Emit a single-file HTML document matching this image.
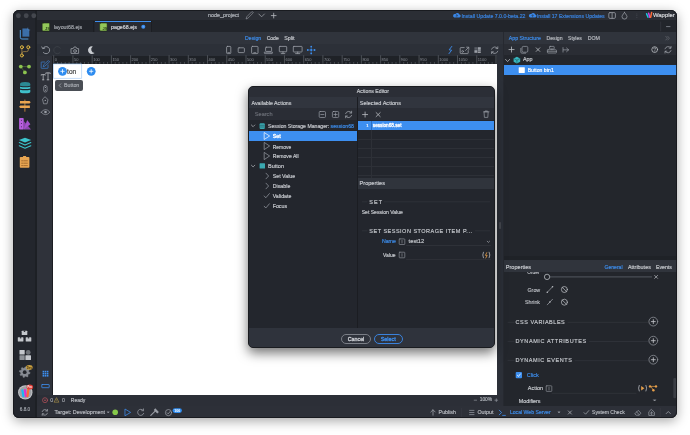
<!DOCTYPE html>
<html><head><meta charset="utf-8">
<style>
*{box-sizing:border-box;margin:0;padding:0}
html,body{width:690px;height:435px;overflow:hidden;background:#fff;font-family:"Liberation Sans",sans-serif;}
#win{position:absolute;left:13px;top:9.5px;width:664px;height:408.5px;border-radius:6px;overflow:hidden;box-shadow:0 3px 12px rgba(0,0,0,.35);background:#22252b}
#in{position:absolute;left:-13px;top:-9.5px;width:690px;height:435px;will-change:transform}
b{position:absolute;display:block}
i{position:absolute;font-style:normal;white-space:nowrap;line-height:1;-webkit-text-stroke:0.16px currentColor}
svg{position:absolute;left:0;top:0;overflow:visible}
</style></head><body>
<div id="win"><div id="in">
<b style="left:36.8px;top:9.5px;width:640.20px;height:11.00px;background:#2b2e35;"></b>
<b style="left:36.8px;top:20.3px;width:640.20px;height:11.90px;background:#22252b;"></b>
<b style="left:95px;top:21px;width:55.50px;height:11.20px;background:#272a31;"></b>
<b style="left:150.5px;top:21px;width:0.70px;height:11.20px;background:#1c1e23;"></b>
<b style="left:93.4px;top:21px;width:0.70px;height:11.20px;background:#1c1e23;"></b>
<b style="left:95px;top:21px;width:55.50px;height:1.10px;background:#3d8ff0;"></b>
<b style="left:36.8px;top:32.2px;width:466.70px;height:11.80px;background:#30343c;"></b>
<b style="left:36.8px;top:44px;width:466.70px;height:12.00px;background:#2c3038;"></b>
<b style="left:36.8px;top:56px;width:15.00px;height:339.00px;background:#2f323a;"></b>
<b style="left:51.8px;top:56px;width:1.20px;height:339.00px;background:#1c1e22;"></b>
<b style="left:53px;top:56px;width:444.00px;height:7.50px;background:#1f2227;"></b>
<b style="left:53px;top:63.5px;width:444.00px;height:331.50px;background:#ffffff;"></b>
<b style="left:497px;top:56px;width:6.50px;height:339.00px;background:#2c3038;"></b>
<b style="left:499.3px;top:222.4px;width:1.40px;height:6.30px;background:#464950;border-radius:0.7px;"></b>
<b style="left:13px;top:9.5px;width:21.50px;height:409.00px;background:#23262d;"></b>
<b style="left:34.5px;top:9.5px;width:2.30px;height:409.00px;background:#1d2025;"></b>
<b style="left:503.5px;top:32px;width:173.50px;height:373.50px;background:#23262c;"></b>
<b style="left:503.5px;top:32px;width:173.50px;height:12.00px;background:#30343c;"></b>
<b style="left:503.5px;top:44px;width:173.50px;height:11.00px;background:#2a2d34;"></b>
<b style="left:503.5px;top:64.8px;width:173.50px;height:10.40px;background:#3d8ff0;"></b>
<i style="left:527.2px;top:271.34px;font-size:4.9px;color:#b9bcc2;">Order</i>
<b style="left:503.5px;top:255.5px;width:173.50px;height:4.70px;background:#1f2227;"></b>
<b style="left:503.5px;top:260.2px;width:173.50px;height:12.20px;background:#30343c;"></b>
<b style="left:503px;top:32px;width:0.70px;height:373.50px;background:#262930;"></b>
<b style="left:36.8px;top:395px;width:466.70px;height:10.50px;background:#2c2f37;"></b>
<b style="left:36.8px;top:405.5px;width:640.20px;height:12.50px;background:#2d3038;"></b>
<i style="left:208.1px;top:13.35px;font-size:5.36px;color:#b4b8bf;">node_project</i>
<i style="left:461.4px;top:13.71px;font-size:5.22px;color:#3a86e6;">Install Update 7.0.0-beta.22</i>
<i style="left:536.9px;top:13.74px;font-size:5.15px;color:#3a86e6;">Install 17 Extensions Updates</i>
<i style="left:653px;top:12.92px;font-size:5.9px;color:#dcdee2;">Wappler</i>
<i style="left:53.9px;top:25.17px;font-size:5.3px;color:#a4a8ae;">layout68.ejs</i>
<i style="left:111px;top:25.17px;font-size:5.3px;color:#d6d9de;">page68.ejs</i>
<i style="left:245px;top:36.00px;font-size:5.23px;color:#3d8ff0;">Design</i>
<i style="left:266.7px;top:36.09px;font-size:5.02px;color:#c8cbd0;">Code</i>
<i style="left:284.2px;top:35.95px;font-size:5.35px;color:#c8cbd0;">Split</i>
<i style="left:508.7px;top:35.99px;font-size:5.27px;color:#3d8ff0;">App Structure</i>
<i style="left:546.4px;top:36.00px;font-size:5.23px;color:#b9bcc2;">Design</i>
<i style="left:568px;top:36.06px;font-size:5.1px;color:#b9bcc2;">Styles</i>
<i style="left:587.7px;top:35.99px;font-size:5.27px;color:#b9bcc2;">DOM</i>
<i style="left:523px;top:57.44px;font-size:5.39px;color:#c8cbd0;">App</i>
<i style="left:527.7px;top:67.86px;font-size:5.1px;color:#ffffff;">Button btn1</i>
<i style="left:505.8px;top:264.96px;font-size:5.57px;color:#c8cbd0;">Properties</i>
<i style="left:604.5px;top:265.46px;font-size:5.09px;color:#3d8ff0;">General</i>
<i style="left:628px;top:265.32px;font-size:5.42px;color:#c8cbd0;">Attributes</i>
<i style="left:656px;top:265.42px;font-size:5.2px;color:#c8cbd0;">Events</i>
<i style="left:525px;top:299.77px;font-size:5.3px;color:#b9bcc2;">Shrink</i>
<i style="left:527.5px;top:287.57px;font-size:5.3px;color:#b9bcc2;">Grow</i>
<i style="left:515.5px;top:320.19px;font-size:5.5px;color:#c4c7cc;letter-spacing:0.52px;">CSS VARIABLES</i>
<i style="left:515.5px;top:339.19px;font-size:5.5px;color:#c4c7cc;letter-spacing:0.6px;">DYNAMIC ATTRIBUTES</i>
<i style="left:515.5px;top:358.49px;font-size:5.5px;color:#c4c7cc;letter-spacing:0.58px;">DYNAMIC EVENTS</i>
<i style="left:526.8px;top:372.77px;font-size:5.54px;color:#3d8ff0;">Click</i>
<i style="left:527.8px;top:386.30px;font-size:5.47px;color:#c8cbd0;">Action</i>
<i style="left:518.8px;top:398.94px;font-size:5.37px;color:#c8cbd0;">Modifiers</i>
<i style="left:50.2px;top:398.17px;font-size:5.3px;color:#a0a4ab;">0</i>
<i style="left:61.9px;top:398.17px;font-size:5.3px;color:#a0a4ab;">0</i>
<i style="left:70.8px;top:398.28px;font-size:5.05px;color:#b9bcc2;">Ready</i>
<i style="left:479.7px;top:398.15px;font-size:4.89px;color:#b0b4ba;">100%</i>
<i style="left:54.6px;top:410.20px;font-size:5.47px;color:#b9bcc2;">Target: Development</i>
<i style="left:438.6px;top:410.27px;font-size:5.3px;color:#b9bcc2;">Publish</i>
<i style="left:477.4px;top:410.26px;font-size:5.33px;color:#b9bcc2;">Output</i>
<i style="left:509.9px;top:410.34px;font-size:5.15px;color:#3d8ff0;">Local Web Server</i>
<i style="left:592px;top:410.36px;font-size:5.09px;color:#b9bcc2;">System Check</i>
<i style="left:19.8px;top:407.53px;font-size:4.7px;color:#a0a4ab;">6.8.0</i>
<i style="left:67.1px;top:68.57px;font-size:6.5px;color:#3a3a3a;">ton</i>
<b style="left:55.2px;top:80.3px;width:27.40px;height:10.30px;background:#4a4e55;border-radius:2px;"></b>
<i style="left:64px;top:83.27px;font-size:5.3px;color:#a9adb3;">Button</i>
<svg width="690" height="435" viewBox="0 0 690 435" fill="none" stroke-linecap="round" stroke-linejoin="round">
<circle cx="18.4" cy="15.7" r="2.45" fill="#44474e"/>
<circle cx="26.2" cy="15.7" r="2.45" fill="#44474e"/>
<circle cx="33.8" cy="15.7" r="2.45" fill="#44474e"/>
<path d="M246.2,18.6 L246.85,16.65 L251.55,11.95 Q252.2,11.3 252.85,11.95 L253.1,12.2 Q253.6,12.8 252.85,13.25 L248.15,17.95 Z" stroke="#9a9ea6" stroke-width="0.6" fill="none" />
<path d="M258.8,14 L261.6,16.8 L264.4,14" stroke="#9a9ea6" stroke-width="0.8" fill="none" />
<path d="M273.7,13.2 V18 M271.3,15.6 H276.1" stroke="#b9bcc2" stroke-width="0.8" fill="none" />
<path d="M454.2,17.4 h5 a1.4,1.4 0 0 0 0.2,-2.8 a2.1,2.1 0 0 0 -3.9,-0.5 a1.7,1.7 0 0 0 -1.3,3.3 Z" stroke="none" stroke-width="0" fill="#3a86e6" />
<path d="M456.8,16.9 v-2 M455.90000000000003,15.7 l0.9,-0.9 l0.9,0.9" stroke="#2b2e35" stroke-width="0.5" fill="none" />
<path d="M530.0,17.4 h5 a1.4,1.4 0 0 0 0.2,-2.8 a2.1,2.1 0 0 0 -3.9,-0.5 a1.7,1.7 0 0 0 -1.3,3.3 Z" stroke="none" stroke-width="0" fill="#3a86e6" />
<path d="M532.6,16.9 v-2 M531.7,15.7 l0.9,-0.9 l0.9,0.9" stroke="#2b2e35" stroke-width="0.5" fill="none" />
<rect x="608.8" y="12.6" width="6.6" height="5.8" rx="1.2" fill="none" stroke="#9a9ea6" stroke-width="0.8"/>
<path d="M612.1,12.8 V18.2" stroke="#9a9ea6" stroke-width="0.8" fill="none" />
<path d="M624.5,12.4 C622.5,15 622,16 622,16.6 A2.5,2.5 0 0 0 627,16.6 C627,16 626.5,15 624.5,12.4 Z" stroke="#9a9ea6" stroke-width="0.75" fill="none" />
<circle cx="636.9" cy="13.9" r="0.45" fill="#5a5e66"/>
<circle cx="636.9" cy="15.6" r="0.45" fill="#5a5e66"/>
<circle cx="636.9" cy="17.3" r="0.45" fill="#5a5e66"/>
<path d="M646.6,13.8 L648,17.3" stroke="#19c8e0" stroke-width="1.5" fill="none" />
<path d="M648.6,13.2 L649.8,17.3" stroke="#d040e0" stroke-width="1.5" fill="none" />
<path d="M651.6,12.6 L650.6,17.3" stroke="#ff6a3a" stroke-width="1.5" fill="none" />
<path d="M660.7,22 V31" stroke="#3a3d44" stroke-width="0.6" fill="none" />
<path d="M666.5,26.6 H670" stroke="#9a9ea6" stroke-width="0.7" fill="none" />
<rect x="42.2" y="23.1" width="7.4" height="7.8" rx="0.8" fill="#93c85a" stroke="#1d2a12" stroke-width="0.5"/>
<text x="45.0" y="30.2" font-size="4.0" font-family="Liberation Sans" font-weight="bold" fill="#2a4018">JS</text>
<rect x="99.7" y="23.1" width="7.4" height="7.8" rx="0.8" fill="#93c85a" stroke="#1d2a12" stroke-width="0.5"/>
<text x="102.5" y="30.2" font-size="4.0" font-family="Liberation Sans" font-weight="bold" fill="#2a4018">JS</text>
<circle cx="143.3" cy="26.8" r="2.0" fill="#3d8ff0"/>
<circle cx="143.3" cy="26.8" r="0.8" fill="#6aaaf5"/>
<path d="M20.3,30.4 V37.4 Q20.3,39 21.9,39 H28" stroke="#52a8f5" stroke-width="0.9" fill="none" />
<path d="M22.2,28 H27.8 L29.8,30 V37.1 H22.2 Z" stroke="#22252b" stroke-width="0.9" fill="#3b6ea8" />
<path d="M27.8,28 V30 H29.8" stroke="#5b8ec8" stroke-width="0.5" fill="none" />
<path d="M21.9,48.8 V53.9 M28.3,48.8 V49.9 Q28.3,51.6 26.6,51.6 H23.6 Q21.9,51.6 21.9,53.3" stroke="#b8944a" stroke-width="0.7" fill="none" />
<circle cx="21.9" cy="47.2" r="1.5" fill="#3a3020" stroke="#e8c14a" stroke-width="0.9"/>
<circle cx="28.3" cy="47.2" r="1.5" fill="#3a3020" stroke="#e8c14a" stroke-width="0.9"/>
<circle cx="21.9" cy="55.5" r="1.5" fill="#3a3020" stroke="#e8c14a" stroke-width="0.9"/>
<path d="M20.8,66.6 H29 M20.8,66.6 L24.9,72.4" stroke="#5f8a35" stroke-width="0.6" fill="none" />
<circle cx="20.8" cy="66.6" r="1.9" fill="#8cc450"/>
<circle cx="29" cy="66.6" r="1.9" fill="#8cc450"/>
<circle cx="24.9" cy="72.4" r="1.9" fill="#8cc450"/>
<path d="M20,84.2 Q20,82 25.15,82 Q30.3,82 30.3,84.2 V85.4 Q30.3,86.2 25.15,86.2 Q20,86.2 20,85.4 Z" stroke="none" stroke-width="0" fill="#2b8a94" />
<path d="M20,86.8 Q25.15,87.8 30.3,86.8 V88.6 Q25.15,89.6 20,88.6 Z" stroke="none" stroke-width="0" fill="#3fc0cb" />
<path d="M20,89.8 Q25.15,90.8 30.3,89.8 V92 Q30.3,93.3 25.15,93.3 Q20,93.3 20,92 Z" stroke="none" stroke-width="0" fill="#3fc0cb" />
<path d="M24.9,100 V111.3" stroke="#c88a3a" stroke-width="0.9" fill="none" />
<path d="M20,101 H29.5 L30.7,102.2 L29.5,103.4 H20 Z" stroke="none" stroke-width="0" fill="#eaa551" />
<path d="M20.3,105.5 H29.9 V108 H20.3 L19.1,106.75 Z" stroke="none" stroke-width="0" fill="#eaa551" />
<path d="M23.7,129.5 L23.7,121 L31.1,129.5 Z" stroke="none" stroke-width="0" fill="#8e46b0" />
<path d="M23.7,129.5 L27.2,120 L30.4,124.2 Z" stroke="none" stroke-width="0" fill="#a552cc" />
<rect x="19.1" y="117.9" width="4.6" height="11.6" rx="0.8" fill="#b85ee0"/>
<circle cx="21.4" cy="120.3" r="0.55" fill="#3a2a45"/>
<circle cx="21.4" cy="123.5" r="0.55" fill="#3a2a45"/>
<circle cx="21.4" cy="126.8" r="0.55" fill="#3a2a45"/>
<path d="M25,137.7 L31.2,140.1 L25,142.5 L18.9,140.1 Z" stroke="none" stroke-width="0" fill="#3cc4cc" />
<path d="M19.3,142.6 L25,145 L30.8,142.6" stroke="#3cc4cc" stroke-width="1.1" fill="none" />
<path d="M19.3,145.8 L25,148.2 L30.8,145.8" stroke="#3cc4cc" stroke-width="1.1" fill="none" />
<rect x="19.8" y="157" width="9.6" height="10.8" rx="0.8" fill="#e8a552"/>
<rect x="23" y="156" width="3.2" height="1.8" rx="0.5" fill="#e8a552"/>
<path d="M21.6,160.8 h1.2 M23.8,160.8 h3.6 M21.6,163.2 h1.2 M23.8,163.2 h3.6 M21.6,165.6 h1.2 M23.8,165.6 h3.6" stroke="#7a4a1a" stroke-width="0.6" fill="none" />
<rect x="21.7" y="330.7" width="5.6" height="4.4" rx="0.6" fill="#c4c7cc"/>
<rect x="23.8" y="330.7" width="1.4" height="1.2" rx="0" fill="#22252b"/>
<rect x="17.8" y="337.2" width="5.6" height="4.4" rx="0.6" fill="#c4c7cc"/>
<rect x="19.900000000000002" y="337.2" width="1.4" height="1.2" rx="0" fill="#22252b"/>
<rect x="25.7" y="337.2" width="5.6" height="4.4" rx="0.6" fill="#c4c7cc"/>
<rect x="27.8" y="337.2" width="1.4" height="1.2" rx="0" fill="#22252b"/>
<rect x="19.5" y="350" width="5.2" height="4.6" rx="0.5" fill="#c4c7cc"/>
<rect x="25.4" y="355.2" width="5.6" height="4.8" rx="0.5" fill="#c4c7cc"/>
<rect x="19.5" y="355.2" width="5.2" height="4.8" rx="0.5" fill="#8e9298"/>
<circle cx="28.2" cy="352.4" r="2.4" fill="#6e7278"/>
<polygon points="30.07,372.74 29.86,373.78 28.31,374.14 27.86,374.81 28.12,376.38 27.24,376.97 25.88,376.13 25.09,376.28 24.16,377.57 23.12,377.36 22.76,375.81 22.09,375.36 20.52,375.62 19.93,374.74 20.77,373.38 20.62,372.59 19.33,371.66 19.54,370.62 21.09,370.26 21.54,369.59 21.28,368.02 22.16,367.43 23.52,368.27 24.31,368.12 25.24,366.83 26.28,367.04 26.64,368.59 27.31,369.04 28.88,368.78 29.47,369.66 28.63,371.02 28.78,371.81" fill="#868a92" stroke="#868a92" stroke-width="0.4" stroke-linejoin="round"/>
<circle cx="24.7" cy="372.2" r="1.9" fill="#22252b"/>
<ellipse cx="29.3" cy="367.4" rx="3.3" ry="2.4" fill="#c9a040"/>
<text x="27.1" y="368.5" font-size="2.6" font-family="Liberation Sans" font-weight="bold" fill="#3a2a10">Dev</text>
<circle cx="25.3" cy="392.4" r="7.2" fill="#c4c6ca"/>
<circle cx="25.3" cy="392.4" r="6.2" fill="#9fa2a7"/>
<path d="M22.4,390.4 L23.4,396.2" stroke="#1ab8f0" stroke-width="2.2" fill="none" />
<path d="M24.9,390.0 L25.9,396.2" stroke="#e030d0" stroke-width="2.2" fill="none" />
<path d="M28.4,389.4 L27.5,396.2" stroke="#ff6a30" stroke-width="2.2" fill="none" />
<ellipse cx="29.8" cy="387.1" rx="3.3" ry="2.5" fill="#e0403a"/>
<text x="27.6" y="388.1" font-size="2.6" font-family="Liberation Sans" font-weight="bold" fill="#fff">Pro</text>
<path d="M44.6,62 H41.6 Q41.2,62 41.2,62.4 V67.9 Q41.2,68.3 41.6,68.3 H47.6 Q48,68.3 48,67.9 V65" stroke="#3d8ff0" stroke-width="0.6" fill="none" />
<path d="M43.3,66.3 L43.8,64.6 L48.4,60.6 L49.6,61.8 L45,66 Z" stroke="#3d8ff0" stroke-width="0.6" fill="none" />
<path d="M41.2,75.2 V74.6 H45.2 V75.2 M43.2,74.6 V79.8 M42.5,79.8 H43.9 M45.8,73.6 V72.9 H50.2 V73.6 M48,72.9 V79.8 M47.1,79.8 H48.9" stroke="#b9bcc2" stroke-width="0.75" fill="none" />
<rect x="43.7" y="85.6" width="3.4" height="6.4" rx="1.5" fill="none" stroke="#9a9ea6" stroke-width="0.7"/>
<circle cx="45.4" cy="87.4" r="0.6" fill="#9a9ea6"/>
<circle cx="45.4" cy="90.2" r="0.6" fill="#9a9ea6"/>
<path d="M45.3,97 L48,99.6 L47,103.8 H43.6 L42.6,99.6 Z" stroke="#9a9ea6" stroke-width="0.7" fill="none" />
<circle cx="45.3" cy="100.4" r="0.7" fill="#9a9ea6"/>
<path d="M41.2,112.2 Q45.5,106.8 49.9,112.2 Q45.5,117.2 41.2,112.2 Z" stroke="#9a9ea6" stroke-width="0.7" fill="none" />
<circle cx="45.5" cy="112" r="1.3" fill="#9a9ea6"/>
<rect x="42.6" y="370.8" width="1.6" height="1.6" rx="0" fill="#3d8ff0"/>
<rect x="42.6" y="372.90000000000003" width="1.6" height="1.6" rx="0" fill="#3d8ff0"/>
<rect x="42.6" y="375.0" width="1.6" height="1.6" rx="0" fill="#3d8ff0"/>
<rect x="44.7" y="370.8" width="1.6" height="1.6" rx="0" fill="#3d8ff0"/>
<rect x="44.7" y="372.90000000000003" width="1.6" height="1.6" rx="0" fill="#3d8ff0"/>
<rect x="44.7" y="375.0" width="1.6" height="1.6" rx="0" fill="#3d8ff0"/>
<rect x="46.800000000000004" y="370.8" width="1.6" height="1.6" rx="0" fill="#3d8ff0"/>
<rect x="46.800000000000004" y="372.90000000000003" width="1.6" height="1.6" rx="0" fill="#3d8ff0"/>
<rect x="46.800000000000004" y="375.0" width="1.6" height="1.6" rx="0" fill="#3d8ff0"/>
<rect x="41.8" y="384.5" width="7.4" height="3.2" rx="0.4" fill="none" stroke="#3d8ff0" stroke-width="0.8"/>
<path d="M43,48.2 A3.6,3.6 0 1 1 43.4,52.6" stroke="#9a9ea6" stroke-width="0.9" fill="none" />
<path d="M41.8,46.9 L42.8,48.7 L44.8,48.1" stroke="#9a9ea6" stroke-width="0.9" fill="none" />
<path d="M60.4,48.2 A3.6,3.6 0 1 0 60,52.6" stroke="#3e4249" stroke-width="0.8" fill="none" />
<path d="M71.4,48.6 H73.2 L74,47 H76 L76.8,48.6 H78.6 V53.4 H71.4 Z" stroke="#9a9ea6" stroke-width="0.8" fill="none" />
<circle cx="75" cy="51" r="1.4" fill="none" stroke="#9a9ea6" stroke-width="0.8"/>
<path d="M92.8,46.4 A3.9,3.9 0 1 0 94.6,53 A3.6,3.6 0 0 1 92.8,46.4 Z" stroke="none" stroke-width="0" fill="#c9ccd1" />
<rect x="226.6" y="46.4" width="4.2" height="7.2" rx="0.8" fill="none" stroke="#9a9ea6" stroke-width="0.8"/>
<rect x="238.2" y="47.8" width="6.2" height="4.8" rx="0.8" fill="none" stroke="#9a9ea6" stroke-width="0.8"/>
<rect x="251.6" y="46.4" width="6.4" height="7.2" rx="0.8" fill="none" stroke="#9a9ea6" stroke-width="0.8"/>
<path d="M227.8,52.6 h1.8 M253.8,52.6 h2" stroke="#9a9ea6" stroke-width="0.7" fill="none" />
<rect x="265.6" y="47.2" width="6" height="4.2" rx="0.6" fill="none" stroke="#9a9ea6" stroke-width="0.8"/>
<path d="M264.6,52.2 H272.6 L272.2,53.6 H265 Z" stroke="#9a9ea6" stroke-width="0.7" fill="none" />
<rect x="279.3" y="46.4" width="7.4" height="5.4" rx="0.6" fill="none" stroke="#9a9ea6" stroke-width="0.8"/>
<path d="M283,51.8 V53.4 M281.2,53.6 H284.8" stroke="#9a9ea6" stroke-width="0.8" fill="none" />
<rect x="293.3" y="46.4" width="8.8" height="5.6" rx="0.6" fill="none" stroke="#9a9ea6" stroke-width="0.8"/>
<path d="M297.7,52 V53.4 M295.6,53.6 H299.8" stroke="#9a9ea6" stroke-width="0.8" fill="none" />
<circle cx="311.2" cy="46.6" r="0.9" fill="#3d8ff0"/>
<circle cx="311.2" cy="53.4" r="0.9" fill="#3d8ff0"/>
<circle cx="307.8" cy="50" r="0.9" fill="#3d8ff0"/>
<circle cx="314.6" cy="50" r="0.9" fill="#3d8ff0"/>
<circle cx="311.2" cy="50" r="0.9" fill="#3d8ff0"/>
<path d="M311.2,47.6 V52.4 M308.8,50 H313.6" stroke="#3d8ff0" stroke-width="0.5" fill="none" />
<path d="M451.8,46.4 L449.2,49.8 L451.6,50.2 L449,53.6" stroke="#3d8ff0" stroke-width="0.9" fill="none" />
<path d="M464.2,47.6 H460.8 Q460.2,47.6 460.2,48.2 V53 Q460.2,53.6 460.8,53.6 H467.6 Q468.2,53.6 468.2,53 V50.6" stroke="#9a9ea6" stroke-width="0.8" fill="none" />
<circle cx="462.6" cy="51.4" r="0.9" fill="none" stroke="#9a9ea6" stroke-width="0.7"/>
<path d="M465.6,50.4 L468.6,47.4 M466.6,47.2 H468.8 V49.4" stroke="#9a9ea6" stroke-width="0.8" fill="none" />
<rect x="474.4" y="47.2" width="3" height="2.6" rx="0" fill="#5a5e66"/>
<rect x="477.8" y="47.2" width="3" height="2.6" rx="0" fill="#9a9ea6"/>
<rect x="474.4" y="50.2" width="3" height="2.6" rx="0" fill="#9a9ea6"/>
<rect x="477.8" y="50.2" width="3" height="1.2" rx="0" fill="#9a9ea6"/>
<rect x="477.8" y="51.8" width="3" height="0.9" rx="0" fill="#c9ccd1"/>
<path d="M491.6,49.2 A3.4,3.4 0 0 1 497.6,48.4 M497.8,51.2 A3.4,3.4 0 0 1 491.8,52 M497.8,46.8 V48.6 H496 M491.6,53.6 V51.8 H493.4" stroke="#9a9ea6" stroke-width="0.8" fill="none" />
<path d="M511.5,47 V52.1 M509,49.55 H514.1" stroke="#b9bcc2" stroke-width="0.8" fill="none" />
<path d="M522,47.6 Q522,46.4 523.2,46.4 H526.6 Q527.8,46.4 527.8,47.6 V51 Q527.8,52.2 526.6,52.2 H523.2 Q522,52.2 522,51 Z" stroke="#9a9ea6" stroke-width="0.7" fill="none" />
<path d="M520.8,48.4 V52 Q520.8,53.2 522,53.2 H525.6" stroke="#9a9ea6" stroke-width="0.7" fill="none" />
<path d="M536.2,47.8 L539.8,51.4 M539.8,47.8 L536.2,51.4" stroke="#b9bcc2" stroke-width="0.8" fill="none" />
<rect x="549.6" y="46.4" width="4.6" height="2.6" rx="0.5" fill="none" stroke="#9a9ea6" stroke-width="0.7"/>
<rect x="547.4" y="49.8" width="9" height="3.2" rx="0.6" fill="none" stroke="#9a9ea6" stroke-width="0.7"/>
<path d="M551.9,49 V49.8 M547.4,51.4 H556.4" stroke="#9a9ea6" stroke-width="0.6" fill="none" />
<path d="M563,47.6 V52.1 M563.4,49.85 H568.6 M566.6,48 L568.6,49.85 L566.6,51.7" stroke="#9a9ea6" stroke-width="0.7" fill="none" />
<circle cx="654.7" cy="49.6" r="2.9" fill="none" stroke="#b9bcc2" stroke-width="0.8"/>
<path d="M653.7,48.6 Q653.9,47.6 654.8,47.7 Q655.8,47.8 655.6,48.8 Q655.4,49.4 654.8,49.8 V50.4" stroke="#b9bcc2" stroke-width="0.6" fill="none" />
<circle cx="654.8" cy="51.4" r="0.35" fill="#b9bcc2"/>
<path d="M665,48.8 A3.3,3.3 0 0 1 670.8,48 M671,50.6 A3.3,3.3 0 0 1 665.2,51.4 M671,46.4 V48.2 H669.2 M665,53 V51.2 H666.8" stroke="#9a9ea6" stroke-width="0.8" fill="none" />
<path d="M665.8,36.4 L667.4,38.2 L665.8,40 M667.8,36.4 L669.4,38.2 L667.8,40" stroke="#6e727a" stroke-width="0.6" fill="none" />
<path d="M505.6,59.4 L507.6,61.6 L509.6,59.4" stroke="#b9bcc2" stroke-width="0.8" fill="none" />
<path d="M516.9,56.7 L520.2,58.4 V61.8 L516.9,63.4 L513.6,61.8 V58.4 Z" stroke="none" stroke-width="0" fill="#37b7c0" />
<path d="M513.8,58.5 L516.9,60.2 L520,58.5 M516.9,60.2 V63.2" stroke="#1e5a60" stroke-width="0.6" fill="none" />
<rect x="518.7" y="67.3" width="6.1" height="5.6" rx="0.4" fill="#ffffff"/>
<path d="M53.70,55.699999999999996 V63.4 M57.55,62.5 V63.4 M61.39,62.5 V63.4 M65.24,62.5 V63.4 M69.08,62.5 V63.4 M72.93,55.699999999999996 V63.4 M76.78,62.5 V63.4 M80.62,62.5 V63.4 M84.47,62.5 V63.4 M88.31,62.5 V63.4 M92.16,55.699999999999996 V63.4 M96.01,62.5 V63.4 M99.85,62.5 V63.4 M103.70,62.5 V63.4 M107.54,62.5 V63.4 M111.39,55.699999999999996 V63.4 M115.24,62.5 V63.4 M119.08,62.5 V63.4 M122.93,62.5 V63.4 M126.77,62.5 V63.4 M130.62,55.699999999999996 V63.4 M134.47,62.5 V63.4 M138.31,62.5 V63.4 M142.16,62.5 V63.4 M146.00,62.5 V63.4 M149.85,55.699999999999996 V63.4 M153.70,62.5 V63.4 M157.54,62.5 V63.4 M161.39,62.5 V63.4 M165.23,62.5 V63.4 M169.08,55.699999999999996 V63.4 M172.93,62.5 V63.4 M176.77,62.5 V63.4 M180.62,62.5 V63.4 M184.46,62.5 V63.4 M188.31,55.699999999999996 V63.4 M192.16,62.5 V63.4 M196.00,62.5 V63.4 M199.85,62.5 V63.4 M203.69,62.5 V63.4 M207.54,55.699999999999996 V63.4 M211.39,62.5 V63.4 M215.23,62.5 V63.4 M219.08,62.5 V63.4 M222.92,62.5 V63.4 M226.77,55.699999999999996 V63.4 M230.62,62.5 V63.4 M234.46,62.5 V63.4 M238.31,62.5 V63.4 M242.15,62.5 V63.4 M246.00,55.699999999999996 V63.4 M249.85,62.5 V63.4 M253.69,62.5 V63.4 M257.54,62.5 V63.4 M261.38,62.5 V63.4 M265.23,55.699999999999996 V63.4 M269.08,62.5 V63.4 M272.92,62.5 V63.4 M276.77,62.5 V63.4 M280.61,62.5 V63.4 M284.46,55.699999999999996 V63.4 M288.31,62.5 V63.4 M292.15,62.5 V63.4 M296.00,62.5 V63.4 M299.84,62.5 V63.4 M303.69,55.699999999999996 V63.4 M307.54,62.5 V63.4 M311.38,62.5 V63.4 M315.23,62.5 V63.4 M319.07,62.5 V63.4 M322.92,55.699999999999996 V63.4 M326.77,62.5 V63.4 M330.61,62.5 V63.4 M334.46,62.5 V63.4 M338.30,62.5 V63.4 M342.15,55.699999999999996 V63.4 M346.00,62.5 V63.4 M349.84,62.5 V63.4 M353.69,62.5 V63.4 M357.53,62.5 V63.4 M361.38,55.699999999999996 V63.4 M365.23,62.5 V63.4 M369.07,62.5 V63.4 M372.92,62.5 V63.4 M376.76,62.5 V63.4 M380.61,55.699999999999996 V63.4 M384.46,62.5 V63.4 M388.30,62.5 V63.4 M392.15,62.5 V63.4 M395.99,62.5 V63.4 M399.84,55.699999999999996 V63.4 M403.69,62.5 V63.4 M407.53,62.5 V63.4 M411.38,62.5 V63.4 M415.22,62.5 V63.4 M419.07,55.699999999999996 V63.4 M422.92,62.5 V63.4 M426.76,62.5 V63.4 M430.61,62.5 V63.4 M434.45,62.5 V63.4 M438.30,55.699999999999996 V63.4 M442.15,62.5 V63.4 M445.99,62.5 V63.4 M449.84,62.5 V63.4 M453.68,62.5 V63.4 M457.53,55.699999999999996 V63.4 M461.38,62.5 V63.4 M465.22,62.5 V63.4 M469.07,62.5 V63.4 M472.91,62.5 V63.4 M476.76,55.699999999999996 V63.4 M480.61,62.5 V63.4 M484.45,62.5 V63.4 M488.30,62.5 V63.4 M492.14,62.5 V63.4 M495.99,55.699999999999996 V63.4" stroke="#6a6e76" stroke-width="0.6" fill="none" />
<text x="54.70" y="61.2" font-size="4.0" font-family="Liberation Sans" fill="#8a8e96">0</text>
<text x="73.93" y="61.2" font-size="4.0" font-family="Liberation Sans" fill="#8a8e96">50</text>
<text x="93.16" y="61.2" font-size="4.0" font-family="Liberation Sans" fill="#8a8e96">100</text>
<text x="112.39" y="61.2" font-size="4.0" font-family="Liberation Sans" fill="#8a8e96">150</text>
<text x="131.62" y="61.2" font-size="4.0" font-family="Liberation Sans" fill="#8a8e96">200</text>
<text x="150.85" y="61.2" font-size="4.0" font-family="Liberation Sans" fill="#8a8e96">250</text>
<text x="170.08" y="61.2" font-size="4.0" font-family="Liberation Sans" fill="#8a8e96">300</text>
<text x="189.31" y="61.2" font-size="4.0" font-family="Liberation Sans" fill="#8a8e96">350</text>
<text x="208.54" y="61.2" font-size="4.0" font-family="Liberation Sans" fill="#8a8e96">400</text>
<text x="227.77" y="61.2" font-size="4.0" font-family="Liberation Sans" fill="#8a8e96">450</text>
<text x="247.00" y="61.2" font-size="4.0" font-family="Liberation Sans" fill="#8a8e96">500</text>
<text x="266.23" y="61.2" font-size="4.0" font-family="Liberation Sans" fill="#8a8e96">550</text>
<text x="285.46" y="61.2" font-size="4.0" font-family="Liberation Sans" fill="#8a8e96">600</text>
<text x="304.69" y="61.2" font-size="4.0" font-family="Liberation Sans" fill="#8a8e96">650</text>
<text x="323.92" y="61.2" font-size="4.0" font-family="Liberation Sans" fill="#8a8e96">700</text>
<text x="343.15" y="61.2" font-size="4.0" font-family="Liberation Sans" fill="#8a8e96">750</text>
<text x="362.38" y="61.2" font-size="4.0" font-family="Liberation Sans" fill="#8a8e96">800</text>
<text x="381.61" y="61.2" font-size="4.0" font-family="Liberation Sans" fill="#8a8e96">850</text>
<text x="400.84" y="61.2" font-size="4.0" font-family="Liberation Sans" fill="#8a8e96">900</text>
<text x="420.07" y="61.2" font-size="4.0" font-family="Liberation Sans" fill="#8a8e96">950</text>
<text x="439.30" y="61.2" font-size="4.0" font-family="Liberation Sans" fill="#8a8e96">1000</text>
<text x="458.53" y="61.2" font-size="4.0" font-family="Liberation Sans" fill="#8a8e96">1050</text>
<text x="477.76" y="61.2" font-size="4.0" font-family="Liberation Sans" fill="#8a8e96">1100</text>
<rect x="53.9" y="63.9" width="27.7" height="14.5" rx="0" fill="none" stroke="#9cc4f2" stroke-width="0.6"/>
<circle cx="62.5" cy="71.3" r="4.4" fill="#2e8cf0"/>
<path d="M62.5,69.6 V73 M60.8,71.3 H64.2" stroke="#ffffff" stroke-width="0.8" fill="none" />
<circle cx="91.2" cy="71.3" r="4.4" fill="#2e8cf0"/>
<path d="M91.2,69.6 V73 M89.5,71.3 H92.9" stroke="#ffffff" stroke-width="0.8" fill="none" />
<path d="M60.8,83.8 L59.2,85.5 L60.8,87.2" stroke="#a9adb3" stroke-width="0.7" fill="none" />
<circle cx="45" cy="400.2" r="2.5" fill="none" stroke="#b8505a" stroke-width="0.7"/>
<circle cx="45" cy="400.2" r="0.8" fill="#b8505a"/>
<path d="M56.7,398 L58.9,402.2 H54.5 Z" stroke="#a08a48" stroke-width="0.7" fill="none" />
<path d="M56.7,399.6 V400.8" stroke="#a08a48" stroke-width="0.5" fill="none" />
<path d="M474.2,400.2 H476.6 M494.9,400.2 H497.7 M496.3,398.8 V401.6" stroke="#a0a4ab" stroke-width="0.6" fill="none" />
<path d="M42.2,411.6 A2.8,2.8 0 0 1 47.2,410.8 M47.4,413.2 A2.8,2.8 0 0 1 42.4,414 M47.4,409.4 V411 H45.8 M42.2,415.4 V413.8 H43.8" stroke="#9a9ea6" stroke-width="0.8" fill="none" />
<path d="M107.4,412 L108.2,413 L109,412 Z" stroke="#9a9ea6" stroke-width="0.5" fill="#9a9ea6" />
<circle cx="115.2" cy="412.2" r="2.8" fill="#86c94a"/>
<path d="M125.3,409.2 L130.6,412.4 L125.3,415.6 Z" stroke="#3d8ff0" stroke-width="0.75" fill="none" />
<path d="M143.2,410.4 A3.1,3.1 0 1 0 143.7,413.4 M143.5,408.9 V410.7 H141.7" stroke="#9a9ea6" stroke-width="0.75" fill="none" />
<path d="M150.8,415.4 L155.4,410.8" stroke="#9a9ea6" stroke-width="1.1" fill="none" />
<polygon points="158.85,411.89 157.29,413.45 153.75,409.91 155.31,408.35" fill="#9a9ea6"/>
<circle cx="168.5" cy="412.6" r="3.1" fill="none" stroke="#9a9ea6" stroke-width="0.75"/>
<path d="M167,412.7 L168.2,413.9 L170.2,411.4" stroke="#9a9ea6" stroke-width="0.75" fill="none" />
<rect x="172.6" y="408.2" width="9.3" height="4.7" rx="2.35" fill="#2e8cf0"/>
<text x="174.2" y="411.9" font-size="3.7" font-family="Liberation Sans" font-weight="bold" fill="#fff">106</text>
<path d="M433,415.2 V409.8 M430.8,412 L433,409.8 L435.2,412" stroke="#9a9ea6" stroke-width="0.8" fill="none" />
<path d="M461.7,408.4 V416.6" stroke="#3a3d44" stroke-width="0.6" fill="none" />
<path d="M469.6,410.4 H474 M469.6,412.5 H474 M469.6,414.6 H474" stroke="#9a9ea6" stroke-width="0.7" fill="none" />
<path d="M499.2,410.2 L501.6,412.5 L499.2,414.8 M502.6,415.4 H505.4" stroke="#3d8ff0" stroke-width="0.8" fill="none" />
<path d="M558.2,412 L559,413 L559.8,412 Z" stroke="#9a9ea6" stroke-width="0.5" fill="#9a9ea6" />
<path d="M568.3,410.9 L571.5,414.1 M571.5,410.9 L568.3,414.1" stroke="#b9bcc2" stroke-width="0.7" fill="none" />
<path d="M584,412.6 L585.6,414.2 L588.8,410.6" stroke="#9a9ea6" stroke-width="0.8" fill="none" />
<path d="M635,413.6 L638.2,410.4 L641,413.2 L639,415.2 H636.6 Z M636.6,412 L639.4,414.8" stroke="#9a9ea6" stroke-width="0.7" fill="none" />
<path d="M651.6,409.6 L654.4,412.2 V415.4 H648.8 V412.2 Z M651.6,412 V414.6 M650.4,413.2 L651.6,412 L652.8,413.2" stroke="#9a9ea6" stroke-width="0.7" fill="none" />
<path d="M660.3,408.4 V416.6" stroke="#3a3d44" stroke-width="0.6" fill="none" />
<path d="M666.2,413.6 L668.3,411.5 L670.4,413.6" stroke="#9a9ea6" stroke-width="0.8" fill="none" />
<circle cx="547.1" cy="276.9" r="2.7" fill="none" stroke="#b9bcc2" stroke-width="0.8"/>
<path d="M550,276.9 H651.6" stroke="#4a4e55" stroke-width="1.1" fill="none" />
<path d="M654.6,275.4 L657.6,278.4 M657.6,275.4 L654.6,278.4" stroke="#b9bcc2" stroke-width="0.7" fill="none" />
<path d="M547.3,292.3 L552.5,286.8" stroke="#b9bcc2" stroke-width="0.6" fill="none" />
<circle cx="547.3" cy="292.3" r="0.75" fill="#b9bcc2"/>
<circle cx="552.5" cy="286.8" r="0.75" fill="#b9bcc2"/>
<path d="M547.3,304.8 L552.5,299.3" stroke="#b9bcc2" stroke-width="0.6" fill="none" />
<circle cx="549.9" cy="302" r="0.8" fill="#b9bcc2"/>
<circle cx="564.4" cy="289.5" r="3.0" fill="none" stroke="#b9bcc2" stroke-width="0.75"/>
<path d="M562.3,287.4 L566.5,291.6" stroke="#b9bcc2" stroke-width="0.75" fill="none" />
<circle cx="564.4" cy="302.2" r="3.0" fill="none" stroke="#b9bcc2" stroke-width="0.75"/>
<path d="M562.3,300.09999999999997 L566.5,304.3" stroke="#b9bcc2" stroke-width="0.75" fill="none" />
<path d="M508,322.3 H514" stroke="#3a3d44" stroke-width="0.5" fill="none" />
<circle cx="653.3" cy="321.6" r="4.4" fill="none" stroke="#8a8e96" stroke-width="0.8"/>
<path d="M653.3,319.6 V323.6 M651.3,321.6 H655.3" stroke="#c9ccd1" stroke-width="0.8" fill="none" />
<path d="M508,341.4 H514" stroke="#3a3d44" stroke-width="0.5" fill="none" />
<circle cx="653.3" cy="340.7" r="4.4" fill="none" stroke="#8a8e96" stroke-width="0.8"/>
<path d="M653.3,338.7 V342.7 M651.3,340.7 H655.3" stroke="#c9ccd1" stroke-width="0.8" fill="none" />
<path d="M508,360.4 H514" stroke="#3a3d44" stroke-width="0.5" fill="none" />
<circle cx="653.3" cy="359.7" r="4.4" fill="none" stroke="#8a8e96" stroke-width="0.8"/>
<path d="M653.3,357.7 V361.7 M651.3,359.7 H655.3" stroke="#c9ccd1" stroke-width="0.8" fill="none" />
<path d="M568,322.3 H648 M589.5,341.5 H648 M575,360.7 H648" stroke="#3a3d44" stroke-width="0.5" fill="none" />
<rect x="515.7" y="372" width="6.3" height="6.3" rx="1" fill="#3d8ff0"/>
<path d="M517.4,375.3 L518.5,376.4 L520.4,373.9" stroke="#fff" stroke-width="0.8" fill="none" />
<rect x="546.2" y="385.8" width="5.6" height="5.6" rx="0.6" fill="none" stroke="#9a9ea6" stroke-width="0.6"/>
<path d="M549,387.3 V390" stroke="#9a9ea6" stroke-width="0.6" fill="none" />
<path d="M552,393.3 H636" stroke="#3a3d44" stroke-width="0.5" fill="none" />
<path d="M639.2,385.4 Q637.8,388.2 639.2,391 M646,385.4 Q647.4,388.2 646,391" stroke="#c9ccd1" stroke-width="0.7" fill="none" />
<path d="M641.2,386 L644.4,388.2 L641.2,390.4 Z" stroke="none" stroke-width="0" fill="#e8a04a" />
<path d="M650,386.4 H656 M650.8,386.4 L653.4,390.2" stroke="#e8a04a" stroke-width="0.7" fill="none" />
<circle cx="650" cy="386.4" r="1.2" fill="#e8a04a"/>
<circle cx="656" cy="386.4" r="1.2" fill="#e8a04a"/>
<circle cx="653.4" cy="390.2" r="1.2" fill="#e8a04a"/>
<path d="M653.6,400 L654.6,401 L655.6,400 Z" stroke="#9a9ea6" stroke-width="0.5" fill="#9a9ea6" />
<rect x="673.3" y="378" width="2.9" height="20.3" rx="1.4" fill="#3a3d44"/>
</svg>
<b style="left:248.1px;top:85.8px;width:247.10px;height:262.10px;background:#23262d;border-radius:5px;border:1px solid #1a1c20;box-shadow:0 5px 12px rgba(0,0,0,.55);"></b>
<b style="left:249.1px;top:86.8px;width:245.10px;height:10.40px;background:#2b2e36;border-radius:4px 4px 0 0;"></b>
<b style="left:249.1px;top:97.2px;width:245.10px;height:10.40px;background:#31353e;"></b>
<b style="left:249.1px;top:107.6px;width:245.10px;height:12.90px;background:#2a2d35;"></b>
<b style="left:249.2px;top:131px;width:108.00px;height:9.90px;background:#3d8ff0;"></b>
<b style="left:358.2px;top:120.9px;width:136.00px;height:8.80px;background:#3d8ff0;"></b>
<b style="left:357.2px;top:97.2px;width:1.00px;height:230.80px;background:#1b1d22;"></b>
<b style="left:249.1px;top:328px;width:245.10px;height:18.90px;background:#2f333c;border-radius:0 0 4px 4px;"></b>
<b style="left:358.2px;top:177.6px;width:136.00px;height:11.40px;background:#30343c;"></b>
<b style="left:358.2px;top:139.2px;width:136.00px;height:0.50px;background:#2d3037;"></b>
<b style="left:358.2px;top:148.2px;width:136.00px;height:0.50px;background:#2d3037;"></b>
<b style="left:358.2px;top:157px;width:136.00px;height:0.50px;background:#2d3037;"></b>
<b style="left:358.2px;top:166px;width:136.00px;height:0.50px;background:#2d3037;"></b>
<b style="left:358.2px;top:174.9px;width:136.00px;height:0.50px;background:#2d3037;"></b>
<b style="left:371.1px;top:129.7px;width:0.60px;height:47.90px;background:#2d3037;"></b>
<b style="left:371.1px;top:120.9px;width:0.60px;height:8.80px;background:#2a6fc4;"></b>
<b style="left:341px;top:333.8px;width:29.90px;height:9.80px;background:transparent;border:0.8px solid #7a7e86;border-radius:5px;"></b>
<b style="left:373.9px;top:333.8px;width:29.00px;height:9.80px;background:transparent;border:0.8px solid #3a82dc;border-radius:5px;"></b>
<i style="left:356.8px;top:89.00px;font-size:5.23px;color:#c8cbd0;">Actions Editor</i>
<i style="left:251.5px;top:100.77px;font-size:5.3px;color:#c8cbd0;">Available Actions</i>
<i style="left:359.7px;top:100.65px;font-size:5.59px;color:#c8cbd0;">Selected Actions</i>
<i style="left:254.8px;top:111.95px;font-size:5.6px;color:#6a6e76;">Search</i>
<i style="left:268px;top:123.72px;font-size:5.18px;color:#c8cbd0;">Session Storage Manager:</i>
<i style="left:330.6px;top:123.72px;font-size:5.2px;color:#3d8ff0;">session68</i>
<i style="left:272.7px;top:133.77px;font-size:5.3px;color:#ffffff;-webkit-text-stroke:0.35px #fff;">Set</i>
<i style="left:272.7px;top:144.50px;font-size:5.0px;color:#c8cbd0;">Remove</i>
<i style="left:272.7px;top:153.94px;font-size:5.14px;color:#c8cbd0;">Remove All</i>
<i style="left:268px;top:163.68px;font-size:5.53px;color:#c8cbd0;">Button</i>
<i style="left:272.7px;top:173.77px;font-size:5.3px;color:#c8cbd0;">Set Value</i>
<i style="left:272.7px;top:183.77px;font-size:5.3px;color:#c8cbd0;">Disable</i>
<i style="left:272.7px;top:193.77px;font-size:5.3px;color:#c8cbd0;">Validate</i>
<i style="left:272.7px;top:203.97px;font-size:5.3px;color:#c8cbd0;">Focus</i>
<i style="left:366.3px;top:124.24px;font-size:4.2px;color:#ffffff;">1</i>
<i style="left:372.8px;top:124.13px;font-size:4.7px;color:#ffffff;-webkit-text-stroke:0.3px #fff;">session68.set</i>
<i style="left:359.6px;top:180.96px;font-size:5.57px;color:#c8cbd0;">Properties</i>
<i style="left:369.3px;top:199.69px;font-size:5.5px;color:#c4c7cc;letter-spacing:1.1px;">SET</i>
<i style="left:361.7px;top:210.16px;font-size:5.09px;color:#c8cbd0;">Set Session Value</i>
<i style="left:369.3px;top:228.69px;font-size:5.5px;color:#c4c7cc;letter-spacing:0.5px;">SET SESSION STORAGE ITEM P...</i>
<i style="left:381.9px;top:239.48px;font-size:5.28px;color:#3d8ff0;">Name</i>
<i style="left:408.6px;top:239.08px;font-size:5.76px;color:#c8cbd0;">test12</i>
<i style="left:383px;top:252.89px;font-size:5.03px;color:#c8cbd0;">Value</i>
<i style="left:347.8px;top:336.67px;font-size:5.3px;color:#d0d3d8;-webkit-text-stroke:0.3px #d0d3d8;">Cancel</i>
<i style="left:380.7px;top:336.63px;font-size:5.4px;color:#3d8ff0;-webkit-text-stroke:0.3px #3d8ff0;">Select</i>
<svg width="690" height="435" viewBox="0 0 690 435" fill="none" stroke-linecap="round" stroke-linejoin="round">
<rect x="319.2" y="111.5" width="6.3" height="6" rx="1" fill="none" stroke="#9a9ea6" stroke-width="0.7"/>
<path d="M320.8,114.5 H323.9" stroke="#9a9ea6" stroke-width="0.7" fill="none" />
<rect x="332.4" y="111.5" width="6.3" height="6" rx="1" fill="none" stroke="#9a9ea6" stroke-width="0.7"/>
<path d="M333.9,114.5 H337.2 M335.55,112.9 V116.1" stroke="#9a9ea6" stroke-width="0.7" fill="none" />
<path d="M345.6,113.6 A3.3,3.3 0 0 1 351.4,112.8 M351.6,115.4 A3.3,3.3 0 0 1 345.8,116.2 M351.6,111.2 V113 H349.8 M345.6,117.8 V116 H347.4" stroke="#9a9ea6" stroke-width="0.8" fill="none" />
<path d="M365.1,112 V117.1 M362.55,114.55 H367.65" stroke="#b9bcc2" stroke-width="0.8" fill="none" />
<path d="M376.1,112.6 L380.2,116.6 M380.2,112.6 L376.1,116.6" stroke="#b9bcc2" stroke-width="0.8" fill="none" />
<path d="M484.4,111.8 H488.2 L487.8,117.4 H484.8 Z M483.6,111.8 H489 M485.4,111 H487.2" stroke="#9a9ea6" stroke-width="0.7" fill="none" />
<path d="M251.4,125 L253.1,126.7 L254.8,125" stroke="#b9bcc2" stroke-width="0.7" fill="none" />
<path d="M251.4,165.2 L253.1,166.9 L254.8,165.2" stroke="#b9bcc2" stroke-width="0.7" fill="none" />
<rect x="259.6" y="123.3" width="5.2" height="5.7" rx="1" fill="#3aa8b0"/>
<path d="M260.4,125.3 H264 M260.4,127 H264" stroke="#1d4a50" stroke-width="0.5" fill="none" />
<rect x="259.6" y="163.2" width="5.4" height="5.4" rx="0.6" fill="#3aa8b0"/>
<path d="M264.5,132.7 L269.6,136 L264.5,139.3 Z" stroke="#ffffff" stroke-width="0.7" fill="none" />
<path d="M264.5,142.6 L269.6,146 L264.5,149.4 Z" stroke="#9a9ea6" stroke-width="0.7" fill="none" />
<path d="M264.5,152.6 L269.6,156 L264.5,159.4 Z" stroke="#9a9ea6" stroke-width="0.7" fill="none" />
<path d="M266,173.2 L268.6,176 L266,178.8" stroke="#9a9ea6" stroke-width="0.7" fill="none" />
<path d="M266,183.2 L268.6,186 L266,188.8" stroke="#9a9ea6" stroke-width="0.7" fill="none" />
<path d="M264.2,196 L265.8,197.8 L269.4,193.6" stroke="#9a9ea6" stroke-width="0.7" fill="none" />
<path d="M264.2,206.2 L265.8,208 L269.4,203.8" stroke="#9a9ea6" stroke-width="0.7" fill="none" />
<path d="M362.4,201.8 H367 M384.4,201.8 H489.5 M362.4,230.8 H367 M475.5,230.8 H489.5" stroke="#3a3d44" stroke-width="0.5" fill="none" />
<rect x="399.2" y="238.9" width="5.6" height="5.6" rx="0.6" fill="none" stroke="#9a9ea6" stroke-width="0.6"/>
<path d="M402,240.4 V243" stroke="#9a9ea6" stroke-width="0.6" fill="none" />
<rect x="399.2" y="252.2" width="5.6" height="5.6" rx="0.6" fill="none" stroke="#9a9ea6" stroke-width="0.6"/>
<path d="M402,253.7 V256.3" stroke="#9a9ea6" stroke-width="0.6" fill="none" />
<path d="M406.5,245.5 H490.5 M406.5,259.6 H490.5" stroke="#3a3d44" stroke-width="0.5" fill="none" />
<path d="M487.2,241.2 L488.4,242.4 L489.6,241.2" stroke="#b9bcc2" stroke-width="0.6" fill="none" />
<path d="M483.4,252.2 Q482,255 483.4,257.8 M489.2,252.2 Q490.6,255 489.2,257.8" stroke="#c9ccd1" stroke-width="0.7" fill="none" />
<path d="M486.8,252.6 L485.4,255.4 H487.2 L485.8,258" stroke="#e8a04a" stroke-width="0.8" fill="none" />
</svg>
</div></div>
<div style="position:absolute;left:13px;top:9.5px;width:664px;height:408.5px;border-radius:6px;border:1px solid rgba(22,23,28,.85)"></div>
</body></html>
